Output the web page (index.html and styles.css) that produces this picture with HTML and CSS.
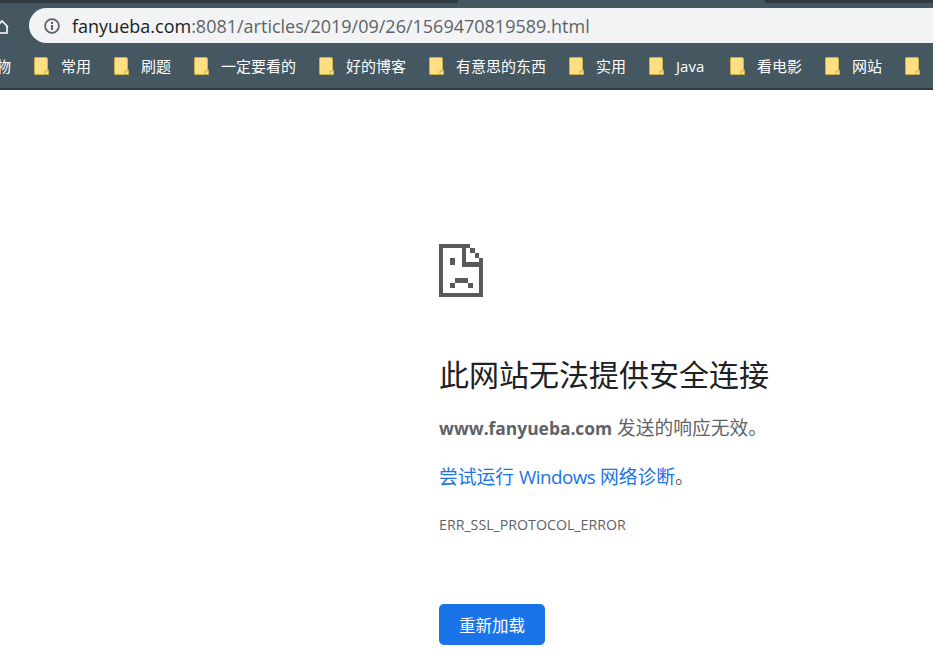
FILE: index.html
```html
<!DOCTYPE html>
<html lang="zh-CN">
<head>
<meta charset="utf-8">
<title>fanyueba.com</title>
<link rel="stylesheet" href="styles.css">
</head>
<body>
<header class="chrome">
  <div class="tabstrip">
    <div class="tab-dark tab-left"></div>
    <div class="tab-active"></div>
    <div class="tab-dark tab-right"></div>
  </div>
  <div class="toolbar">
    <div class="home">
      <svg width="9" height="16" viewBox="0 0 9 16"><path d="M-2 7.5 L2 3 L8 9 M7 8 V15 H-2" fill="none" stroke="#fff" stroke-width="1.6"/></svg>
    </div>
    <div class="omnibox">
      <svg class="info" width="16" height="16" viewBox="0 0 16 16"><circle cx="8" cy="8" r="6.9" fill="none" stroke="#5f6368" stroke-width="1.8"/><rect x="7" y="7" width="2" height="5" fill="#5f6368"/><rect x="7" y="4" width="2" height="2" fill="#5f6368"/></svg>
      <div class="url"><span class="host">fanyueba.com</span>:8081/articles/2019/09/26/1569470819589.html</div>
    </div>
  </div>
  <nav class="bookmarks">
    <span class="cut-label"><span>购物</span></span>
    <a class="bm bm-common"><svg class="folder" viewBox="0 0 15 18"><use href="#page"/></svg>常用</a>
    <a class="bm bm-common"><svg class="folder" viewBox="0 0 15 18"><use href="#page"/></svg>刷题</a>
    <a class="bm"><svg class="folder" viewBox="0 0 15 18"><use href="#page"/></svg>一定要看的</a>
    <a class="bm"><svg class="folder" viewBox="0 0 15 18"><use href="#page"/></svg>好的博客</a>
    <a class="bm"><svg class="folder" viewBox="0 0 15 18"><use href="#page"/></svg>有意思的东西</a>
    <a class="bm"><svg class="folder" viewBox="0 0 15 18"><use href="#page"/></svg>实用</a>
    <a class="bm bm-java"><svg class="folder" viewBox="0 0 15 18"><use href="#page"/></svg>Java</a>
    <a class="bm"><svg class="folder" viewBox="0 0 15 18"><use href="#page"/></svg>看电影</a>
    <a class="bm"><svg class="folder" viewBox="0 0 15 18"><use href="#page"/></svg>网站</a>
    <a class="bm"><svg class="folder" viewBox="0 0 15 18"><use href="#page"/></svg></a>
  </nav>
</header>
<svg class="defs" width="0" height="0">
  <symbol id="page" viewBox="0 0 15 18">
    <path d="M1.5 .5 H12 Q13.5 .5 13.5 2 V13 H14.5 V17.5 H1.5 Q.5 17.5 .5 16.5 V1.5 Q.5 .5 1.5 .5Z" fill="#fee082" stroke="#cdb04a"/>
    <path d="M11 17 V14 H14" fill="none" stroke="#cdb04a"/>
  </symbol>
</svg>
<main class="error">
  <svg class="sad" width="45" height="54" viewBox="27 27 135 162" shape-rendering="crispEdges" fill="#58595b">
    <rect x="27" y="27" width="93" height="13"/>
    <rect x="27" y="27" width="13" height="160"/>
    <rect x="27" y="175" width="133" height="12"/>
    <rect x="148" y="68" width="12" height="119"/>
    <rect x="95" y="27" width="13" height="68"/>
    <rect x="95" y="82" width="65" height="13"/>
    <rect x="120" y="40" width="14" height="14"/>
    <rect x="134" y="54" width="14" height="14"/>
    <rect x="60" y="68" width="14" height="23"/>
    <rect x="74" y="130" width="41" height="14"/>
    <rect x="60" y="144" width="14" height="14"/>
    <rect x="115" y="144" width="14" height="14"/>
  </svg>
  <h1 class="title">此网站无法提供安全连接</h1>
  <p class="summary"><strong>www.fanyueba.com</strong> 发送的响应无效。</p>
  <p class="hint"><a class="link">尝试运行 <span class="latin">Windows</span> 网络诊断</a>。</p>
  <p class="code">ERR_SSL_PROTOCOL_ERROR</p>
  <button class="reload">重新加载</button>
</main>
</body>
</html>
```
FILE: styles.css
```css
* { box-sizing: border-box; }
html, body { margin: 0; padding: 0; height: 100%; overflow: hidden; background: #fff; }
body { font-family: "Open Sans", "Noto Sans CJK SC", sans-serif; display: flex; flex-direction: column; width: 933px; height: 670px; }
.defs { position: absolute; }

.chrome { background: #455760; height: 90px; border-bottom: 2px solid #2f3b40; flex: none; }
.tabstrip { display: flex; height: 3px; }
.tab-dark { background: #2f3b40; }
.tab-left { width: 458px; }
.tab-active { flex: 1; }
.tab-right { width: 168px; }

.toolbar { display: flex; align-items: center; height: 35px; margin-top: 5px; }
.home { width: 29px; display: flex; align-items: center; }
.omnibox { flex: 1; height: 35px; background: #f1f3f4; border-radius: 17.5px 0 0 17.5px; display: flex; align-items: center; padding-left: 15px; }
.info { flex: none; }
.url { margin-left: 12px; font-size: 18px; color: #5f6368; white-space: nowrap; }
.host { color: #202124; }

.bookmarks { display: flex; align-items: center; height: 45px; color: #fff; font-size: 15px; white-space: nowrap; font-family: "Noto Sans CJK SC", sans-serif; }
.cut-label { width: 11px; overflow: hidden; display: flex; justify-content: flex-end; flex: none; margin-right: 23px; }
.cut-label span { flex: none; }
.bm { display: flex; align-items: center; flex: none; margin-right: 23px; }
.bm-common { margin-right: 22px; width: 58px; }
.bm-java { margin-right: 24px; width: 57px; font-family: "Open Sans", sans-serif; font-size: 15px; }
.folder { width: 15px; height: 18px; margin-right: 12px; flex: none; }

.error { margin-left: 439px; padding-top: 154px; flex: 1; color: #5f6368; font-size: 18.75px; }
.sad { display: block; }
.title { margin: 53px 0 0; font-size: 30px; font-weight: 400; line-height: 44px; color: #202124; font-family: "Noto Sans CJK SC", sans-serif; white-space: nowrap; }
.summary { margin: 19px 0 0; line-height: 28px; white-space: nowrap; }
.summary strong { font-weight: 700; font-size: 17.4px; }
.hint { margin: 21px 0 0; line-height: 28px; white-space: nowrap; }
.link { color: #1a73e8; }
.latin { letter-spacing: -.5px; }
.code { margin: 24px 0 0; font-size: 14.2px; line-height: 20px; text-transform: uppercase; }
.reload { display: block; margin-top: 69px; width: 106px; height: 41px; padding: 0; border: 0; border-radius: 5px; background: #1a73e8; color: #fff; font-size: 16.5px; font-family: "Noto Sans CJK SC", sans-serif; }
```
